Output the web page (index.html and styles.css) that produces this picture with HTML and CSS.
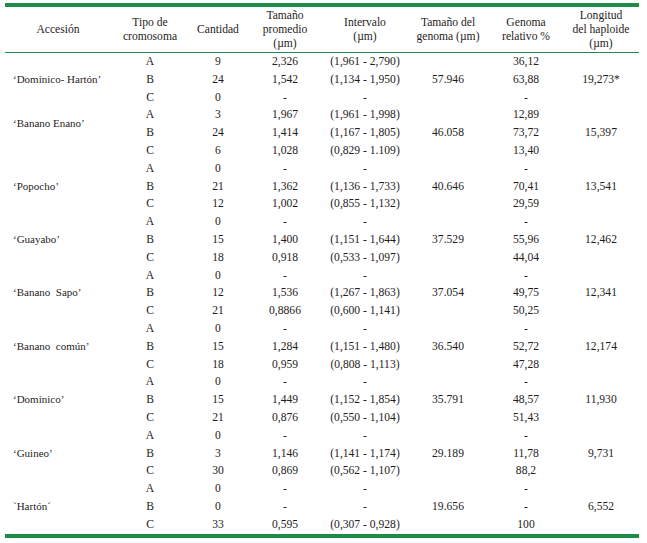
FILE: index.html
```html
<!DOCTYPE html>
<html lang="es">
<head>
<meta charset="utf-8">
<title>Tabla</title>
<link rel="stylesheet" href="styles.css">
</head>
<body>
<table class="data">
<colgroup>
<col class="c1"><col class="c2"><col class="c3"><col class="c4"><col class="c5"><col class="c6"><col class="c7"><col class="c8">
</colgroup>
<thead>
<tr>
<th>Accesión</th>
<th>Tipo de<br>cromosoma</th>
<th>Cantidad</th>
<th>Tamaño<br>promedio<br>(µm)</th>
<th>Intervalo<br>(µm)</th>
<th>Tamaño del<br>genoma (µm)</th>
<th>Genoma<br>relativo %</th>
<th>Longitud<br>del haploide<br>(µm)</th>
</tr>
</thead>
<tbody>
<tr><td class="name"></td><td>A</td><td>9</td><td>2,326</td><td>(1,961 - 2,790)</td><td></td><td>36,12</td><td></td></tr>
<tr><td class="name">‘Dominico- Hartón’</td><td>B</td><td>24</td><td>1,542</td><td>(1,134 - 1,950)</td><td>57.946</td><td>63,88</td><td>19,273*</td></tr>
<tr><td class="name"></td><td>C</td><td>0</td><td>-</td><td>-</td><td></td><td>-</td><td></td></tr>

<tr><td class="name" rowspan="2">‘Banano Enano’</td><td>A</td><td>3</td><td>1,967</td><td>(1,961 - 1,998)</td><td></td><td>12,89</td><td></td></tr>
<tr><td>B</td><td>24</td><td>1,414</td><td>(1,167 - 1,805)</td><td>46.058</td><td>73,72</td><td>15,397</td></tr>
<tr><td class="name"></td><td>C</td><td>6</td><td>1,028</td><td>(0,829 - 1.109)</td><td></td><td>13,40</td><td></td></tr>

<tr><td class="name"></td><td>A</td><td>0</td><td>-</td><td>-</td><td></td><td>-</td><td></td></tr>
<tr><td class="name">‘Popocho’</td><td>B</td><td>21</td><td>1,362</td><td>(1,136 - 1,733)</td><td>40.646</td><td>70,41</td><td>13,541</td></tr>
<tr><td class="name"></td><td>C</td><td>12</td><td>1,002</td><td>(0,855 - 1,132)</td><td></td><td>29,59</td><td></td></tr>

<tr><td class="name"></td><td>A</td><td>0</td><td>-</td><td>-</td><td></td><td>-</td><td></td></tr>
<tr><td class="name">‘Guayabo’</td><td>B</td><td>15</td><td>1,400</td><td>(1,151 - 1,644)</td><td>37.529</td><td>55,96</td><td>12,462</td></tr>
<tr><td class="name"></td><td>C</td><td>18</td><td>0,918</td><td>(0,533 - 1,097)</td><td></td><td>44,04</td><td></td></tr>

<tr><td class="name"></td><td>A</td><td>0</td><td>-</td><td>-</td><td></td><td>-</td><td></td></tr>
<tr><td class="name">‘Banano  Sapo’</td><td>B</td><td>12</td><td>1,536</td><td>(1,267 - 1,863)</td><td>37.054</td><td>49,75</td><td>12,341</td></tr>
<tr><td class="name"></td><td>C</td><td>21</td><td>0,8866</td><td>(0,600 - 1,141)</td><td></td><td>50,25</td><td></td></tr>

<tr><td class="name"></td><td>A</td><td>0</td><td>-</td><td>-</td><td></td><td>-</td><td></td></tr>
<tr><td class="name">‘Banano  común’</td><td>B</td><td>15</td><td>1,284</td><td>(1,151 - 1,480)</td><td>36.540</td><td>52,72</td><td>12,174</td></tr>
<tr><td class="name"></td><td>C</td><td>18</td><td>0,959</td><td>(0,808 - 1,113)</td><td></td><td>47,28</td><td></td></tr>

<tr><td class="name"></td><td>A</td><td>0</td><td>-</td><td>-</td><td></td><td>-</td><td></td></tr>
<tr><td class="name">‘Dominico’</td><td>B</td><td>15</td><td>1,449</td><td>(1,152 - 1,854)</td><td>35.791</td><td>48,57</td><td>11,930</td></tr>
<tr><td class="name"></td><td>C</td><td>21</td><td>0,876</td><td>(0,550 - 1,104)</td><td></td><td>51,43</td><td></td></tr>

<tr><td class="name"></td><td>A</td><td>0</td><td>-</td><td>-</td><td></td><td>-</td><td></td></tr>
<tr><td class="name">‘Guineo’</td><td>B</td><td>3</td><td>1,146</td><td>(1,141 - 1,174)</td><td>29.189</td><td>11,78</td><td>9,731</td></tr>
<tr><td class="name"></td><td>C</td><td>30</td><td>0,869</td><td>(0,562 - 1,107)</td><td></td><td>88,2</td><td></td></tr>

<tr><td class="name"></td><td>A</td><td>0</td><td>-</td><td>-</td><td></td><td>-</td><td></td></tr>
<tr><td class="name">`Hartón´</td><td>B</td><td>0</td><td>-</td><td>-</td><td>19.656</td><td>-</td><td>6,552</td></tr>
<tr><td class="name"></td><td>C</td><td>33</td><td>0,595</td><td>(0,307 - 0,928)</td><td></td><td>100</td><td></td></tr>
</tbody>
</table>
</body>
</html>
```

FILE: styles.css
```css
html, body {
  background: #ffffff;
}
body {
  margin: 3px 0 0 5px;
  font-family: "Liberation Serif", "Times New Roman", serif;
  font-size: 11.6px;
  color: #1f1c1d;
}
.data {
  width: 634px;
  table-layout: fixed;
  border-collapse: separate;
  border-spacing: 0;
  border-top: 4px solid #1d8c48;
  border-bottom: 4px solid #1d8c48;
}
.c1 { width: 106px; }
.c2 { width: 78px; }
.c3 { width: 58px; }
.c4 { width: 76px; }
.c5 { width: 84px; }
.c6 { width: 82px; }
.c7 { width: 74px; }
.c8 { width: 76px; }
.data th {
  font-weight: normal;
  font-size: 11.6px;
  line-height: 14px;
  height: 45px;
  padding: 0;
  vertical-align: middle;
  text-align: center;
  border-bottom: 1px solid #1d8c48;
}
.data td {
  padding: 0;
  height: 17.8px;
  line-height: 17.8px;
  text-align: center;
  vertical-align: middle;
  white-space: pre;
}
.data td.name {
  font-size: 11px;
  text-align: left;
  padding-left: 8px;
}
```
